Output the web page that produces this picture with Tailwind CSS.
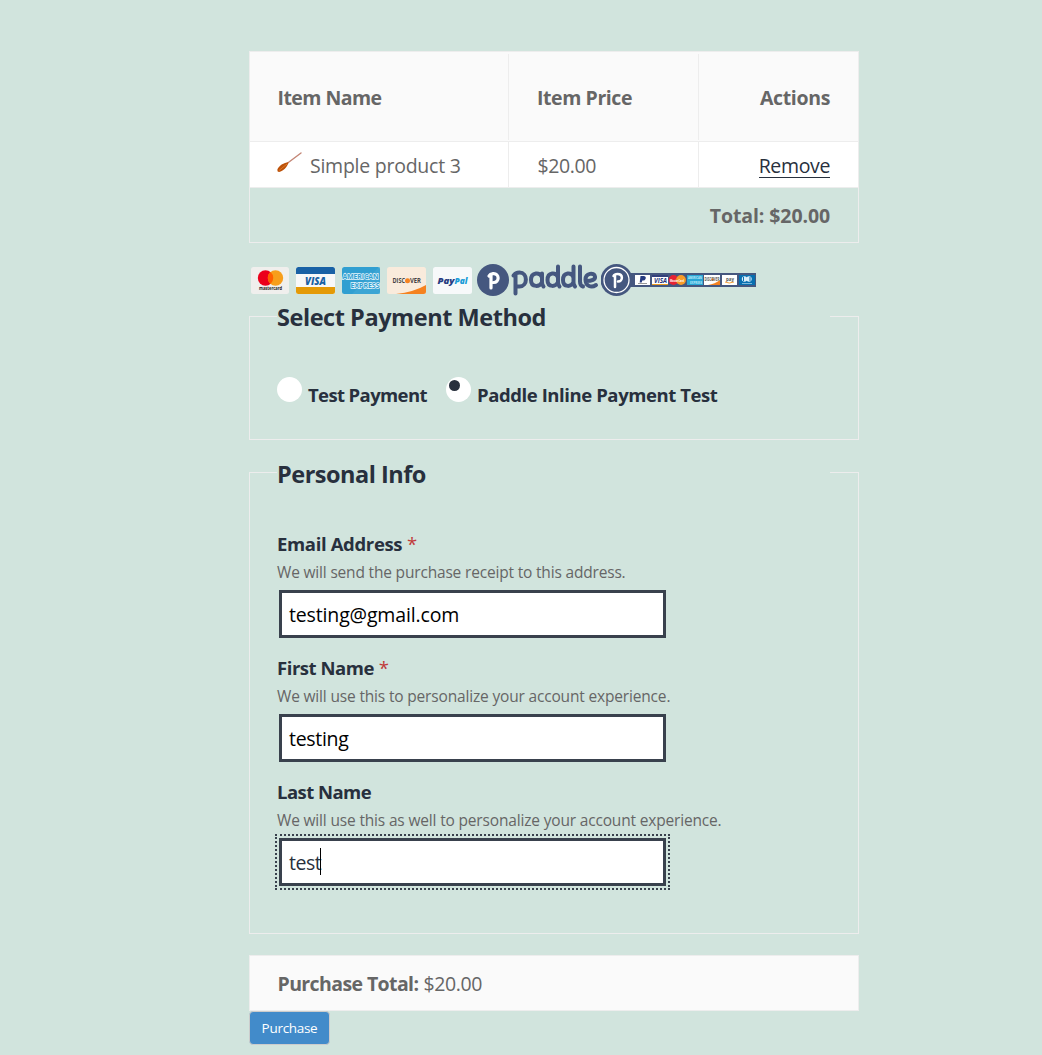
<!DOCTYPE html>
<html lang="en">
<head>
<meta charset="utf-8">
<title>Checkout</title>
<script src="https://cdn.jsdelivr.net/npm/@tailwindcss/browser@4"></script>
</head>
<body class="min-h-[1055px] overflow-hidden bg-[#d1e4dd] font-['Open_Sans','Noto_Sans',sans-serif] text-[#666]">
<main class="ml-[249px] w-[610px] pt-[51px] text-[19.5px] leading-7">
  <section class="border border-[#ededed]">
    <div class="flex h-[90px] items-center border-b border-[#ededed] bg-[#fafafa] pt-[3px] font-bold">
      <div class="flex h-full w-[259px] -mt-[3px] items-center border-r border-[#ededed] pl-[27.5px] pt-[3px]"><span class="tracking-[-0.55px]">Item Name</span></div>
      <div class="flex h-full w-[190px] -mt-[3px] items-center border-r border-[#ededed] pl-[28px] pt-[3px]"><span class="tracking-[-0.42px]">Item Price</span></div>
      <div class="flex flex-1 -mt-[3px] justify-end pr-[28px] pt-[3px]"><span class="tracking-[-0.35px]">Actions</span></div>
    </div>
    <div class="flex h-[46px] border-b border-[#ededed] bg-white">
      <div class="flex w-[259px] items-center border-r border-[#ededed] pl-[27px] pt-[3px]">
        <svg class="-mt-[7px] mr-[8px]" width="25" height="22" viewBox="0 0 25 22"><path d="M10 11.500 24 1" stroke="#c48676" stroke-width="1.400" stroke-linecap="round"/><path d="M.3 17.700C1.500 13.800 7 10.500 11.500 10.300 11 14.200 6 19.700 2.100 20Q.2 20 .3 17.700Z" fill="#bd5108"/><path d="M2 18.500 10 12" stroke="#df8130" stroke-width=".8"/></svg>
        <span class="tracking-[-0.25px]">Simple product 3</span>
      </div>
      <div class="flex w-[190px] items-center border-r border-[#ededed] pl-[28.5px] pt-[3px]"><span class="tracking-[-0.4px]">$20.00</span></div>
      <div class="flex flex-1 items-center justify-end pr-[28px] pt-[3px]"><a class="border-b border-[#28303d] leading-[22px] tracking-[-0.35px] text-[#28303d]">Remove</a></div>
    </div>
    <div class="flex h-[54px] items-center justify-end pr-[28px] pt-[2px] font-bold"><span class="tracking-[-0.1px]">Total: $20.00</span></div>
  </section>

  <div class="mt-[20px] flex h-[35px] items-start pl-[2px] pt-px">
    <div class="flex gap-[6.4px] pt-[3px]">
      <svg width="39" height="27" viewBox="0 0 39 27"><rect width="38" height="27" rx="2.500" fill="#f0efed"/><circle cx="14.500" cy="11" r="7.700" fill="#eb001b"/><circle cx="24.500" cy="11" r="7.700" fill="#f79e1b"/><path d="M19.500 5.100a7.700 7.700 0 0 1 0 11.800 7.700 7.700 0 0 1 0-11.800Z" fill="#ff5f00"/><text x="8" y="23" textLength="23" lengthAdjust="spacingAndGlyphs" font-size="5" font-weight="700" fill="#222">mastercard</text></svg>
      <svg width="39" height="27" viewBox="0 0 39 27"><rect width="39" height="27" rx="2.500" fill="#f8f8f8"/><path d="M0 7V2.500Q0 0 2.500 0h34Q39 0 39 2.500V7Z" fill="#1961a5"/><path d="M0 20v4.500Q0 27 2.500 27h34q2.500 0 2.500-2.500V20Z" fill="#e49a07"/><text x="9" y="17.500" textLength="21" lengthAdjust="spacingAndGlyphs" font-size="10" font-style="italic" font-weight="800" fill="#1961a5">VISA</text></svg>
      <svg width="39" height="27" viewBox="0 0 39 27"><rect width="38" height="27" rx="2.500" fill="#319fd1"/><path d="m10 27 27-27h1v27Z" fill="#47abd7" opacity=".5"/><g font-size="7.500" font-weight="700" fill="#319fd1" stroke="#e7f6fc" stroke-width="1.300" paint-order="stroke"><text x=".5" y="12" textLength="36" lengthAdjust="spacingAndGlyphs">AMERICAN</text><text x="8.500" y="20.500" textLength="29" lengthAdjust="spacingAndGlyphs">EXPRESS</text></g></svg>
      <svg width="39" height="27" viewBox="0 0 39 27"><rect width="39" height="27" rx="2.500" fill="#f9ebdc"/><path d="M9 27Q27 25 39 18v6.500Q39 27 36.500 27Z" fill="#f58220"/><g font-size="6.500" font-weight="700" fill="#444"><text x="5.500" y="16" textLength="12.500" lengthAdjust="spacingAndGlyphs">DISC</text><text x="23" y="16" textLength="11" lengthAdjust="spacingAndGlyphs">VER</text></g><circle cx="20.500" cy="13.700" r="2.500" fill="#f58220"/></svg>
      <svg width="39" height="27" viewBox="0 0 39 27"><rect width="39" height="27" rx="2.500" fill="#f7f9fa"/><g font-size="9" font-style="italic" font-weight="800"><text x="4.500" y="16.500" textLength="17" lengthAdjust="spacingAndGlyphs" fill="#253b80">Pay</text><text x="21.500" y="16.500" textLength="13" lengthAdjust="spacingAndGlyphs" fill="#179bd7">Pal</text></g></svg>
    </div>
    <svg class="ml-[5.4px]" width="124" height="34" viewBox="0 0 124 34"><circle cx="16" cy="16" r="16" fill="#45577f"/><g fill="none" stroke="#fff" stroke-width="3.200" stroke-linecap="round" stroke-linejoin="round"><path d="M14 11v13M12 12q1-2 4-2.300c7-.7 6.500 9 .5 8.800"/></g><g fill="none" stroke="#45577f" stroke-width="4" stroke-linecap="round" stroke-linejoin="round"><path d="M38.500 11v18.500M36.500 11.500q2-3 6-3c8.500 0 8.500 14 0 14q-2 0-3.500-.7M65 20.500V9.500M65 13.500c-1.500-6-11-5.500-11 2.500S63.500 23 65 18q0 3 1.500 4.500M81 2.500v18M81 13.500c-1.500-6-10.500-5.500-10.500 2.500S79.500 23 81 18q0 3 1.500 4.500M96.500 2.500v18M96.500 13.500c-1.500-6-10.500-5.500-10.500 2.500S95 23 96.500 18q0 3 1.500 4.500M103 2.500v15q0 4 3 5M109 17c6 0 9.500-1.500 9-4.500-.8-4.500-9.500-3.500-9.500 3 0 7 6 8.500 10.500 5.500"/></g></svg>
    <svg width="157" height="34" viewBox="0 0 157 34"><path d="M28 9h127v14H28Z" fill="#45577f"/><circle cx="15.500" cy="16" r="16" fill="#45577f"/><circle cx="15.500" cy="16" r="12.500" fill="none" stroke="#fff" stroke-width="1.300"/><g fill="none" stroke="#fff" stroke-width="2.500" stroke-linecap="round"><path d="M14 12v11M12.500 12q1-2 4-2c6 0 5.500 7.500.5 7.500"/></g>
      <g fill="#fff"><path d="M34 11h15v10H34zM51 11h16v10H51zM103 11h16v10h-16zM121 11h15v10h-15z"/></g><path d="M86 11h16v10H86Z" fill="#29a6d5"/><path d="M138 11h16v10h-16Z" fill="#086fb0"/>
      <path d="M39.500 12h3.500q2.500.5 1.500 3-.8 2-3.200 1.500l-.6 2h-2Z" fill="#253b80"/><path d="M37 19.500h9" stroke="#999"/><path d="M51 11h16v2H51Z" fill="#34417c"/><path d="M51 20h16v1H51Z" fill="#ec9b22"/><circle cx="72.500" cy="16" r="4.900" fill="#e62334"/><circle cx="80" cy="16" r="4.900" fill="#f89c28"/><path d="M107 21q7-1 12-5v5Z" fill="#f58220"/><circle cx="111.500" cy="15.500" r="1.300" fill="#f58220"/><path d="M124 18q4 2 9 0" stroke="#f7a238" stroke-width="1" fill="none"/><circle cx="143.500" cy="15" r="2.700" fill="#dceefa"/><circle cx="148" cy="15" r="2.700" fill="#dceefa"/><path d="M142.500 13v4M149 13v4" stroke="#086fb0"/><path d="M141 19.500h10" stroke="#79b5d9"/>
      <g font-weight="700"><text x="53" y="18.500" textLength="13" lengthAdjust="spacingAndGlyphs" font-size="6.500" font-style="italic" fill="#26357c">VISA</text><text x="69" y="17.500" textLength="14" lengthAdjust="spacingAndGlyphs" font-size="3.500" fill="#fff">MasterCard</text><text x="87" y="15" textLength="14" lengthAdjust="spacingAndGlyphs" font-size="3.500" fill="#bce9f8">AMERICAN</text><text x="89" y="20" textLength="12" lengthAdjust="spacingAndGlyphs" font-size="3.500" fill="#bce9f8">EXPRESS</text><text x="103.500" y="17.200" textLength="15" lengthAdjust="spacingAndGlyphs" font-size="4.500" fill="#555">DISCOVER</text><text x="125" y="16.500" textLength="8" lengthAdjust="spacingAndGlyphs" font-size="6" fill="#555">pay</text></g></svg>
  </div>

  <fieldset class="mt-[4px] h-[138px] border border-[#ededed] pl-[27px] pr-[28px] text-[#28303d]">
    <legend class="h-[29px] w-full text-[23.5px] font-bold leading-[30px]"><span class="tracking-[-0.45px]">Select Payment Method</span></legend>
    <div class="flex pt-[45px] text-[18.5px] font-bold">
      <span class="mr-[6px] mt-px size-[25px] rounded-full bg-white"></span><span class="mt-[5px] w-[119px] whitespace-nowrap leading-[27px] tracking-[-0.62px]">Test Payment</span>
      <span class="ml-[19px] mr-[6px] mt-px size-[25px] rounded-full bg-white pl-[3px] pt-[3px]"><span class="block size-[11px] rounded-full bg-[#28303d]"></span></span><span class="mt-[5px] whitespace-nowrap leading-[27px] tracking-[-0.42px]">Paddle Inline Payment Test</span>
    </div>
  </fieldset>

  <fieldset class="mt-[18px] h-[476px] border border-[#ededed] pl-[27px] pr-[28px] text-[#28303d]">
    <legend class="h-[29px] w-full text-[23.5px] font-bold leading-[32px]"><span class="tracking-[-0.5px]">Personal Info</span></legend>
    <div class="flex flex-col pt-[42px]">
      <div class="h-[124px]">
        <div class="h-[30px] text-[18.500px] font-bold leading-[30px]"><span class="tracking-[-0.35px]">Email Address</span> <span class="font-normal text-[#c03a3a]">*</span></div>
        <div class="h-[27px] text-[15.500px] leading-[27px] tracking-[-0.18px]">
          <span class="text-[#666]">We will send the purchase receipt to this address.</span></div>
        <div class="ml-[2px] mt-[4px] flex h-[48px] w-[387px] items-center border-3 border-[#39414d] bg-white pl-[7px] pt-px text-black"><span class="tracking-[-0.15px]">testing@gmail.com</span></div>
      </div>
      <div class="h-[124px]">
        <div class="h-[30px] text-[18.500px] font-bold leading-[30px]"><span class="tracking-[-0.45px]">First Name</span> <span class="font-normal text-[#c03a3a]">*</span></div>
        <div class="h-[27px] text-[15.500px] leading-[27px] tracking-[-0.17px]"><span class="text-[#666]">We will use this to personalize your account experience.</span></div>
        <div class="ml-[2px] mt-[4px] flex h-[48px] w-[387px] items-center border-3 border-[#39414d] bg-white pl-[7px] pt-px text-black"><span class="tracking-[-0.3px]">testing</span></div>
      </div>
      <div class="h-[124px]">
        <div class="h-[30px] text-[18.500px] font-bold leading-[30px]"><span class="tracking-[-0.55px]">Last Name</span></div>
        <div class="h-[27px] text-[15.500px] leading-[27px] tracking-[-0.17px]"><span class="text-[#666]">We will use this as well to personalize your account experience.</span></div>
        <div class="ml-[2px] mt-[4px] flex h-[48px] w-[387px] items-center border-3 border-[#39414d] bg-white pl-[7px] pt-px outline-2 outline-offset-2 outline-dotted outline-[#39414d]"><span class="w-[31px] tracking-[-0.5px]">test</span><span class="-mt-[2px] h-[27px] w-px bg-black"></span></div>
      </div>
    </div>
  </fieldset>

  <div class="mt-[21px] flex h-[56px] items-center border border-[#ededed] bg-[#fafafa] pl-[27.5px] pt-[2px]"><span class="mr-[5px] tracking-[-0.6px] font-bold">Purchase Total:</span><span class="tracking-[-0.4px]">$20.00</span></div>
  <button class="flex h-[34px] w-[81px] items-center justify-center rounded-[4px] border border-[#ccc] bg-[#428bca] text-[13.500px] text-white"><span class="tracking-[-0.3px]">Purchase</span></button>
</main>
</body>
</html>
